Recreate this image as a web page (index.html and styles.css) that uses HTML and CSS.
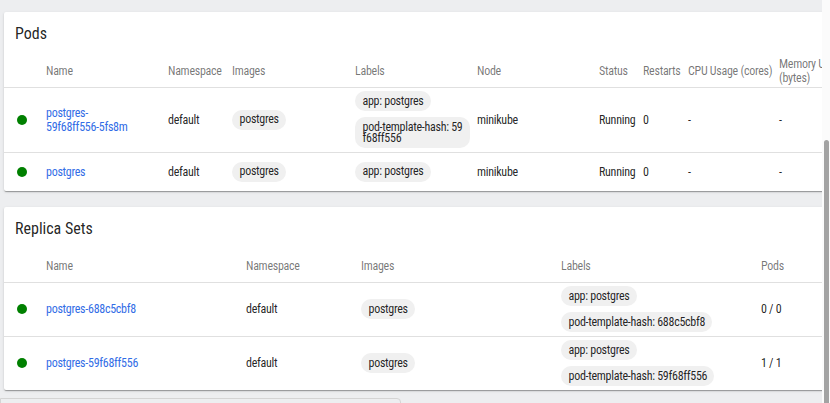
FILE: index.html
```html
<!DOCTYPE html>
<html lang="en">
<head>
<meta charset="utf-8">
<title>Workloads</title>
<link rel="stylesheet" href="styles.css">
</head>
<body>
<div class="app">
  <main class="content">
    <section class="card">
      <h2 class="card-title">Pods</h2>
      <div class="table pods">
        <div class="row head">
          <div></div>
          <div>Name</div>
          <div>Namespace</div>
          <div>Images</div>
          <div>Labels</div>
          <div>Node</div>
          <div>Status</div>
          <div>Restarts</div>
          <div>CPU Usage (cores)</div>
          <div>Memory Usage (bytes)</div>
        </div>
        <div class="row">
          <div><span class="dot"></span></div>
          <div class="name"><a href="#">postgres-59f68ff556-5fs8m</a></div>
          <div>default</div>
          <div><span class="chip">postgres</span></div>
          <div class="labels"><span class="chip">app: postgres</span><span class="chip">pod-template-hash: 59f68ff556</span></div>
          <div>minikube</div>
          <div>Running</div>
          <div>0</div>
          <div>-</div>
          <div>-</div>
        </div>
        <div class="row">
          <div><span class="dot"></span></div>
          <div class="name"><a href="#">postgres</a></div>
          <div>default</div>
          <div><span class="chip">postgres</span></div>
          <div class="labels"><span class="chip">app: postgres</span></div>
          <div>minikube</div>
          <div>Running</div>
          <div>0</div>
          <div>-</div>
          <div>-</div>
        </div>
      </div>
    </section>

    <section class="card rs-card">
      <h2 class="card-title">Replica Sets</h2>
      <div class="table rs">
        <div class="row head">
          <div></div>
          <div>Name</div>
          <div>Namespace</div>
          <div>Images</div>
          <div>Labels</div>
          <div>Pods</div>
        </div>
        <div class="row">
          <div><span class="dot"></span></div>
          <div><a href="#">postgres-688c5cbf8</a></div>
          <div>default</div>
          <div><span class="chip">postgres</span></div>
          <div class="labels"><span class="chip">app: postgres</span><span class="chip">pod-template-hash: 688c5cbf8</span></div>
          <div>0 / 0</div>
        </div>
        <div class="row">
          <div><span class="dot"></span></div>
          <div><a href="#">postgres-59f68ff556</a></div>
          <div>default</div>
          <div><span class="chip">postgres</span></div>
          <div class="labels"><span class="chip">app: postgres</span><span class="chip">pod-template-hash: 59f68ff556</span></div>
          <div>1 / 1</div>
        </div>
      </div>
    </section>

    <div class="next-box"></div>
  </main>
  <div class="scrollbar"><div class="thumb"></div></div>
</div>
</body>
</html>
```

FILE: styles.css
```css
* { box-sizing: border-box; }
html, body { margin: 0; padding: 0; }
body {
  font-family: Roboto, "Noto Sans", "Liberation Sans", sans-serif;
  font-stretch: 85%;
  color: rgba(0, 0, 0, 0.87);
  overflow: hidden;
}
.app {
  display: flex;
  width: 830px;
  height: 403px;
  overflow: hidden;
}
.content {
  flex: 0 0 822px;
  overflow: hidden;
  background: #edeef0;
  padding: 12px 0 0 4px;
}
.scrollbar {
  flex: 0 0 8px;
  background: #fbfbfb;
  padding-top: 140px;
  display: flex;
  justify-content: center;
}
.thumb {
  width: 5px;
  height: 300px;
  background: #a3a3a3;
  border-radius: 3px;
}
.card {
  width: 940px;
  background: #fff;
  border-radius: 2px;
  box-shadow: 0 2px 1px -1px rgba(0,0,0,.2), 0 1px 1px 0 rgba(0,0,0,.14), 0 1px 3px 0 rgba(0,0,0,.12);
}
.rs-card { margin-top: 16px; }
.card-title {
  margin: 0;
  height: 43px;
  padding: 12px 0 0 11px;
  font-size: 16px;
  line-height: 20px;
  font-weight: 400;
}
.row {
  display: grid;
  align-items: center;
  min-height: 38px;
  padding: 3px 0 4px;
  border-bottom: 1px solid #e0e0e0;
  font-size: 12px;
  line-height: 14px;
  letter-spacing: -0.28px;
}
.row:last-child { border-bottom: none; }
.row.head {
  min-height: 33px;
  padding: 0;
  color: rgba(0, 0, 0, 0.54);
}
.row.head:last-child { border-bottom: 1px solid #e0e0e0; }
.pods .row { grid-template-columns: 42px 122px 64px 123px 122px 122px 44px 45px 91px 75px; }
.rs .row { grid-template-columns: 42px 200px 115px 200px 200px 100px; }
.name { padding-right: 34px; }
a { color: #326de6; text-decoration: none; }
.dot {
  display: block;
  width: 10px;
  height: 10px;
  border-radius: 50%;
  background: #008000;
  margin-left: 13px;
}
.chip {
  display: inline-block;
  background: #f0f0f0;
  border-radius: 10px;
  padding: 4.5px 7px 4.5px 7.5px;
  line-height: 11px;
  word-break: break-all;
  max-width: 100%;
}
.labels {
  display: flex;
  flex-direction: column;
  align-items: flex-start;
  gap: 6px;
  padding-right: 7px;
}
.next-box {
  margin: 8px 0 0 -4px;
  width: 401px;
  height: 20px;
  border: 1px solid #d4d4d4;
  border-radius: 0 4px 0 0;
}
```
